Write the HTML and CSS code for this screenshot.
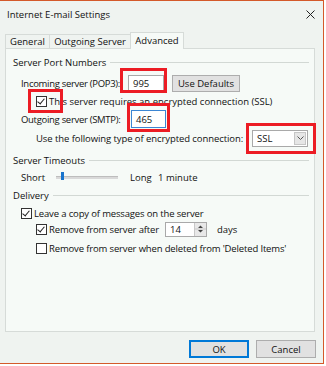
FILE: index.html
```html
<!DOCTYPE html>
<html lang="en">
<head>
    <meta charset="UTF-8">
    <title>Internet E-mail Settings</title>
    <link rel="stylesheet" href="styles.css">
</head>
<body>
    <div class="dialog">
        <div class="titlebar">
            <span class="title">Internet E-mail Settings</span>
            <svg class="close" width="9" height="9" viewBox="0 0 9 9">
                <path d="M0.5 0.5 L8.5 8.5 M8.5 0.5 L0.5 8.5" stroke="#222" stroke-width="1"/>
            </svg>
        </div>

        <div class="tabs">
            <div class="tab tab-general">General</div>
            <div class="tab tab-outgoing">Outgoing Server</div>
            <div class="tab tab-advanced active">Advanced</div>
        </div>

        <div class="panel">
            <div class="group-title">Server Port Numbers</div>

            <div class="row in1 row-incoming">
                <span class="field-label lbl-in">Incoming server (POP3):</span>
                <div class="textbox port">995</div>
                <div class="btn btn-defaults">Use Defaults</div>
            </div>

            <div class="row in2">
                <span class="check checked"></span>
                <span>This server requires an encrypted connection (SSL)</span>
            </div>

            <div class="row in1">
                <span class="field-label lbl-out">Outgoing server (SMTP):</span>
                <div class="textbox port port-out focused">465</div>
            </div>

            <div class="row in2 row-enc">
                <span class="field-label lbl-enc">Use the following type of encrypted connection:</span>
                <div class="select">
                    <span class="select-value">SSL</span>
                    <span class="select-arrow">
                        <svg width="7" height="4" viewBox="0 0 7 4"><path d="M0.5 0.5 L3.5 3.5 L6.5 0.5" fill="none" stroke="#555" stroke-width="1"/></svg>
                    </span>
                </div>
            </div>

            <div class="group-title group-timeouts">Server Timeouts</div>

            <div class="row in1 row-slider">
                <span class="lbl-short">Short</span>
                <div class="slider"><span class="thumb"></span></div>
                <span class="lbl-long">Long</span>
                <span>1 minute</span>
            </div>

            <div class="group-title group-delivery">Delivery</div>

            <div class="row in1 row-check row-leave">
                <span class="check checked"></span>
                <span class="tight">Leave a copy of messages on the server</span>
            </div>

            <div class="row in2 row-check">
                <span class="check checked"></span>
                <span class="lbl-remove tight">Remove from server after</span>
                <div class="spinner">
                    <span class="spinner-value">14</span>
                    <span class="spinner-arrows">
                        <svg width="11" height="12" viewBox="0 0 11 12">
                            <path d="M3 5 L5.5 2.5 L8 5 Z M3 7 L5.5 9.5 L8 7 Z" fill="#444"/>
                            <path d="M0 6 H11" stroke="#c8c8c8" stroke-width="1"/>
                        </svg>
                    </span>
                </div>
                <span class="lbl-days">days</span>
            </div>

            <div class="row in2 row-check row-deleted">
                <span class="check"></span>
                <span class="tight">Remove from server when deleted from 'Deleted Items'</span>
            </div>
        </div>

        <div class="footer">
            <div class="btn btn-footer btn-default">OK</div>
            <div class="btn btn-footer">Cancel</div>
        </div>

        <div class="mark mark-in"></div>
        <div class="mark mark-ssl"></div>
        <div class="mark mark-out"></div>
        <div class="mark mark-enc"></div>
    </div>
</body>
</html>
```

FILE: styles.css
```css
body {
    margin: 0;
    background: #fff;
    font-family: 'Open Sans', sans-serif;
    font-size: 9.5px;
    color: #111;
    white-space: nowrap;
}
.dialog {
    position: relative;
    width: 323px;
    height: 362px;
    border: 1px solid #d4592a;
    border-left: none;
    background: #eff3f0;
    display: flex;
    flex-direction: column;
}
.titlebar {
    height: 26px;
    display: flex;
    align-items: center;
    justify-content: space-between;
    padding: 0 8px 0 7px;
}
.tabs {
    display: flex;
    align-items: flex-end;
    height: 16px;
    margin: 5px 0 0 5px;
}
.tab {
    box-sizing: border-box;
    height: 14px;
    line-height: 13px;
    text-align: center;
    border: 1px solid #d6dbd8;
    border-bottom: none;
    margin-right: -1px;
}
.tab-general { width: 45px; }
.tab-outgoing { width: 82px; }
.tab-advanced { width: 54px; }
.tab.active {
    position: relative;
    z-index: 1;
    height: 17px;
    margin-bottom: -1px;
    line-height: 15px;
    background: #f6faf7;
}
.panel {
    box-sizing: border-box;
    height: 284px;
    margin: 0 8px 0 5px;
    padding: 6px 5px 0 7px;
    background: #f6faf7;
    border: 1px solid #d6dbd8;
}
.group-title {
    display: flex;
    align-items: center;
    gap: 4px;
    height: 14px;
}
.group-title::after {
    content: "";
    flex: 1;
    height: 1px;
    background: #d2d8d4;
}
.group-timeouts { margin-top: 6px; }
.group-delivery { margin-top: 2px; }
.row {
    display: flex;
    align-items: center;
    height: 18px;
}
.in1 { padding-left: 8px; }
.in2 { padding-left: 23px; }
.row-incoming { margin-top: 5px; }
.row-enc { margin-top: 1px; }
.row-slider { margin-top: 1px; }
.row-check { height: 16px; }
.row-leave { margin-top: 3px; }
.row-deleted { margin-top: 3px; }
.tight { letter-spacing: -0.15px; }
.field-label { flex: none; letter-spacing: -0.3px; }
.lbl-in { width: 107px; }
.lbl-out { width: 110px; }
.lbl-enc { width: 216px; letter-spacing: -0.08px; }
.textbox {
    box-sizing: border-box;
    background: #fff;
    border: 1px solid #a9a9a9;
    display: flex;
    align-items: center;
    padding-left: 4px;
}
.port {
    width: 36px;
    height: 17px;
}
.port-out {
    width: 35px;
    height: 18px;
}
.focused { border-color: #3b86d4; }
.btn {
    box-sizing: border-box;
    display: flex;
    align-items: center;
    justify-content: center;
    background: #e1e1e1;
    border: 1px solid #adadad;
}
.btn-defaults {
    width: 68px;
    height: 17px;
    margin-left: 8px;
}
.check {
    box-sizing: border-box;
    flex: none;
    width: 11px;
    height: 11px;
    margin-right: 2px;
    background: #fff;
    border: 1px solid #333;
    position: relative;
}
.checked::after {
    content: "";
    position: absolute;
    left: 2px;
    top: 0px;
    width: 3px;
    height: 6px;
    border: solid #222;
    border-width: 0 1px 1px 0;
    transform: rotate(40deg);
}
.select {
    box-sizing: border-box;
    width: 56px;
    height: 17px;
    background: #fff;
    border: 1px solid #a9a9a9;
    display: flex;
    align-items: center;
    justify-content: space-between;
}
.select-value { padding-left: 4px; }
.select-arrow {
    width: 12px;
    height: 13px;
    margin-right: 1px;
    background: #e6e6e6;
    border: 1px solid #c6c6c6;
    box-sizing: border-box;
    display: flex;
    align-items: center;
    justify-content: center;
}
.lbl-short { width: 35px; }
.slider {
    position: relative;
    width: 62px;
    height: 2px;
    background: #d9d9d9;
    border-top: 1px solid #bdbdbd;
    margin-right: 12px;
}
.thumb {
    position: absolute;
    left: 5px;
    top: -5px;
    width: 3px;
    height: 8px;
    background: #1874cd;
}
.lbl-long { width: 28px; }
.lbl-remove { width: 116px; }
.spinner {
    box-sizing: border-box;
    width: 42px;
    height: 15px;
    background: #fff;
    border: 1px solid #a9a9a9;
    display: flex;
    align-items: center;
    justify-content: space-between;
}
.spinner-value { padding-left: 4px; }
.spinner-arrows {
    width: 11px;
    height: 13px;
    background: #e8e8e8;
    border-left: 1px solid #c8c8c8;
    display: flex;
}
.lbl-days { margin-left: 10px; }
.footer {
    display: flex;
    justify-content: flex-end;
    gap: 7px;
    margin-top: 8px;
    padding-right: 7px;
}
.btn-footer {
    width: 60px;
    height: 18px;
}
.btn-default {
    border: 2px solid #0078d7;
}
.mark {
    position: absolute;
    box-sizing: border-box;
    border: 3px solid #ec1c24;
}
.mark-in { left: 120px; top: 67px; width: 47px; height: 25px; }
.mark-ssl { left: 28px; top: 88px; width: 35px; height: 24px; }
.mark-out { left: 127px; top: 102px; width: 43px; height: 29px; }
.mark-enc { left: 246px; top: 122px; width: 70px; height: 31px; }
```
